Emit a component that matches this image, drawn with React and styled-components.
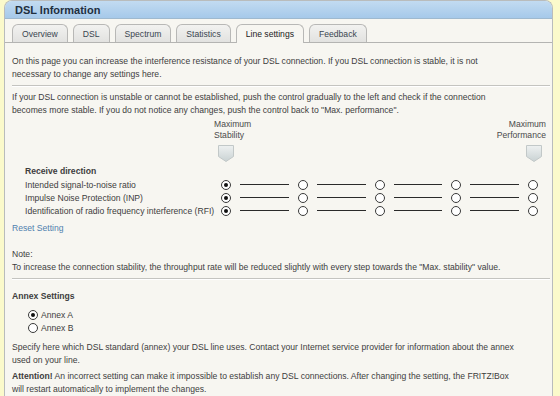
import React from "react";
import styled, { createGlobalStyle } from "styled-components";

const tabs = ["Overview", "DSL", "Spectrum", "Statistics", "Line settings", "Feedback"];
const rows = [
  "Intended signal-to-noise ratio",
  "Impulse Noise Protection (INP)",
  "Identification of radio frequency interference (RFI)",
];

function Pointer() {
  return (
    <svg width="16" height="17" viewBox="0 0 16 17">
      <defs>
        <linearGradient id="pg" x1="0" y1="0" x2="0" y2="1">
          <stop offset="0" stopColor="#eef1f1" />
          <stop offset="1" stopColor="#c9d2d3" />
        </linearGradient>
      </defs>
      <path d="M0.5 0.5 H15.5 V11.5 L8 16.5 L0.5 11.5 Z" fill="url(#pg)" stroke="#c2c8c8" />
    </svg>
  );
}

function App() {
  return (
    <>
      <CSSReset />
      <Panel.Wrapper>
        <Panel.Header>DSL Information</Panel.Header>
        <Tabs.Bar>
          {tabs.map((t) => (
            <Tabs.Tab key={t} $active={t === "Line settings"}>
              {t}
            </Tabs.Tab>
          ))}
        </Tabs.Bar>
        <Panel.Body>
          <Text>
            On this page you can increase the interference resistance of your DSL connection. If you DSL connection is
            stable, it is not
            <br />
            necessary to change any settings here.
          </Text>
          <Rule />
          <Text>
            If your DSL connection is unstable or cannot be established, push the control gradually to the left and
            check if the connection
            <br />
            becomes more stable. If you do not notice any changes, push the control back to "Max. performance".
          </Text>

          <Slider.Head>
            <Slider.End>
              <Slider.Caption>
                Maximum
                <br />
                Stability
              </Slider.Caption>
              <Slider.PointerBox>
                <Pointer />
              </Slider.PointerBox>
            </Slider.End>
            <Slider.End $right>
              <Slider.Caption $right>
                Maximum
                <br />
                Performance
              </Slider.Caption>
              <Slider.PointerBox $right>
                <Pointer />
              </Slider.PointerBox>
            </Slider.End>
          </Slider.Head>

          <Slider.Group>
            <Bold>Receive direction</Bold>
            {rows.map((r) => (
              <Slider.Row key={r}>
                <Slider.Label>{r}</Slider.Label>
                <Slider.Track>
                  {[0, 1, 2, 3, 4].map((i) => (
                    <React.Fragment key={i}>
                      {i > 0 && <Slider.Line />}
                      <Radio $checked={i === 0} />
                    </React.Fragment>
                  ))}
                </Slider.Track>
              </Slider.Row>
            ))}
          </Slider.Group>

          <Link>Reset Setting</Link>

          <Note.Title>Note:</Note.Title>
          <Text>
            To increase the connection stability, the throughput rate will be reduced slightly with every step towards
            the "Max. stability" value.
          </Text>
          <Rule />

          <Annex.Title>Annex Settings</Annex.Title>
          <Annex.Options>
            <Annex.Option>
              <Radio $checked />
              Annex A
            </Annex.Option>
            <Annex.Option>
              <Radio />
              Annex B
            </Annex.Option>
          </Annex.Options>
          <Annex.Para $gap={7}>
            Specify here which DSL standard (annex) your DSL line uses. Contact your Internet service provider for
            information about the annex
            <br />
            used on your line.
          </Annex.Para>
          <Annex.Para $gap={3}>
            <b>Attention!</b> An incorrect setting can make it impossible to establish any DSL connections. After
            changing the setting, the FRITZ!Box
            <br />
            will restart automatically to implement the changes.
          </Annex.Para>
        </Panel.Body>
      </Panel.Wrapper>
    </>
  );
}

const Panel = {
  Wrapper: styled.div`
    margin-left: 4px;
    width: 549px;
    border: 1px solid #b9bcbc;
    border-bottom: none;
    border-radius: 8px 8px 0 0;
    background: #f7f6f1;
    min-height: 420px;
    overflow: hidden;
  `,
  Header: styled.div`
    height: 18px;
    padding-left: 10px;
    background: linear-gradient(#c2dbf1, #a6c9ea);
    border-bottom: 1px solid #9fb9cf;
    font-weight: bold;
    font-size: 11px;
    line-height: 19px;
    color: #1f2f3f;
  `,
  Body: styled.div`
    padding: 12px 7px 0 7px;
  `,
};

const Tabs = {
  Bar: styled.div`
    display: flex;
    gap: 5px;
    padding: 5px 0 0 7px;
    border-bottom: 1px solid #b4b4b2;
  `,
  Tab: styled.div`
    padding: 0 9px;
    line-height: 18px;
    font-size: 8.6px;
    color: ${(p) => (p.$active ? "#222" : "#3a4650")};
    background: ${(p) => (p.$active ? "#f7f6f1" : "linear-gradient(#f2f2f0, #e2e2e0)")};
    border: 1px solid #b8b8b6;
    border-bottom: none;
    border-radius: 6px 6px 0 0;
    margin-bottom: ${(p) => (p.$active ? "-1px" : "0")};
    height: ${(p) => (p.$active ? "19px" : "18px")};
  `,
};

const Text = styled.p`
  font-size: 8.6px;
  line-height: 13px;
  color: #3d3d3d;
  white-space: nowrap;
`;

const Bold = styled.div`
  font-weight: bold;
  font-size: 8.6px;
  line-height: 13px;
  color: #3d3d3d;
`;

const Rule = styled.hr`
  border: none;
  border-top: 1px solid #c4c4c0;
  border-bottom: 1px solid #fff;
  margin: 4px 0 4px;
  width: 538px;
`;

const Slider = {
  Head: styled.div`
    display: flex;
    justify-content: space-between;
    padding-left: 202px;
    width: 534px;
    margin-top: 2px;
  `,
  End: styled.div`
    display: flex;
    flex-direction: column;
    align-items: ${(p) => (p.$right ? "flex-end" : "flex-start")};
  `,
  Caption: styled.div`
    font-size: 8.6px;
    line-height: 11px;
    color: #4a4a4a;
    text-align: ${(p) => (p.$right ? "right" : "left")};
  `,
  PointerBox: styled.div`
    display: flex;
    margin-top: 4px;
    padding: ${(p) => (p.$right ? "0 4px 0 0" : "0 0 0 4px")};
    height: 17px;
  `,
  Group: styled.div`
    padding-left: 13px;
    margin-top: 3px;
  `,
  Row: styled.div`
    display: flex;
    align-items: center;
    height: 13px;
  `,
  Label: styled.div`
    width: 196px;
    font-size: 8.6px;
    color: #3d3d3d;
  `,
  Track: styled.div`
    display: flex;
    align-items: center;
    width: 317px;
  `,
  Line: styled.div`
    flex: 1;
    height: 1px;
    background: #2a2a2a;
    margin: 0 9px;
  `,
};

const Radio = styled.span`
  position: relative;
  flex: none;
  display: inline-block;
  width: 10px;
  height: 10px;
  border: 1px solid #3a3a3a;
  border-radius: 50%;
  background: #fff;
  &::after {
    content: "";
    display: ${(p) => (p.$checked ? "block" : "none")};
    position: absolute;
    left: 2px;
    top: 2px;
    width: 4px;
    height: 4px;
    border-radius: 50%;
    background: #111;
  }
`;

const Link = styled.div`
  margin-top: 5px;
  font-size: 8.6px;
  line-height: 13px;
  color: #4f7fae;
`;

const Note = {
  Title: styled.div`
    margin-top: 13px;
    font-size: 8.6px;
    line-height: 13px;
    color: #3d3d3d;
  `,
};

const Annex = {
  Title: styled.div`
    margin-top: 10px;
    font-weight: bold;
    font-size: 8.6px;
    line-height: 13px;
    color: #3d3d3d;
  `,
  Options: styled.div`
    margin-top: 5px;
    padding-left: 16px;
  `,
  Option: styled.div`
    display: flex;
    align-items: center;
    gap: 3px;
    height: 13px;
    font-size: 8.6px;
    color: #3d3d3d;
  `,
  Para: styled.p`
    margin-top: ${(p) => p.$gap}px;
    font-size: 8.6px;
    line-height: 13px;
    color: #3d3d3d;
    white-space: nowrap;
  `,
};

const CSSReset = createGlobalStyle`
*,
*::before,
*::after {
  margin: 0;
  padding: 0;
  box-sizing: border-box;
}

body {
  background: #fbfacb;
  font-family: "Liberation Sans", Arial, sans-serif;
  overflow: hidden;
}
`;

export default App;
